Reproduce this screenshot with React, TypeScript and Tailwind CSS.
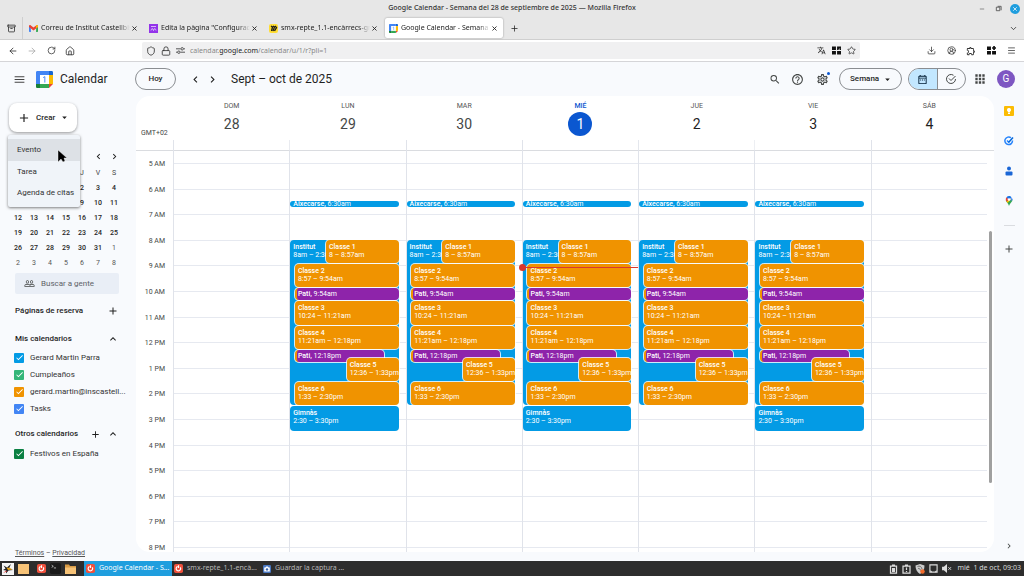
import type { ReactNode } from 'react';
import {
  MdAdd, MdApps, MdArrowDropDown, MdCheck, MdChevronLeft, MdChevronRight, MdHelpOutline, MdKeyboardArrowUp, MdMenu,
  MdOutlineExtension, MdOutlineSettings, MdPeopleOutline, MdSearch, MdTranslate,
} from 'react-icons/md';
import {
  Archive, ArrowLeft, ArrowRight, ChevronDown, CircleUserRound, Download, House, Lock, Menu, Minus, Plus, RotateCw,
  Shield, Star, X,
} from 'lucide-react';

const FIRST_HOUR = 5;
const HOURS = 15;

type CalEvent = {
  title: string;
  time: string;
  start: number;
  end: number;
  left: number;
  right: number;
  kind: 'blue' | 'orange' | 'purple';
  inline?: boolean;
};

const at = (h: number, m: number) => h + m / 60;

const WAKE: CalEvent = { title: 'Aixecarse', time: '6:30am', start: at(6, 30), end: at(6, 45), left: 0, right: 6, kind: 'blue', inline: true };
const SCHOOL: CalEvent[] = [
  WAKE,
  { title: 'Institut', time: '8am – 2:30pm', start: 8, end: at(14, 30), left: 0, right: 6, kind: 'blue' },
  { title: 'Classe 1', time: '8 – 8:57am', start: 8, end: at(8, 57), left: 31, right: 6, kind: 'orange' },
  { title: 'Classe 2', time: '8:57 – 9:54am', start: at(8, 57), end: at(9, 54), left: 4, right: 6, kind: 'orange' },
  { title: 'Pati', time: '9:54am', start: at(9, 54), end: at(10, 24), left: 4, right: 6, kind: 'purple', inline: true },
  { title: 'Classe 3', time: '10:24 – 11:21am', start: at(10, 24), end: at(11, 21), left: 4, right: 6, kind: 'orange' },
  { title: 'Classe 4', time: '11:21am – 12:18pm', start: at(11, 21), end: at(12, 18), left: 4, right: 6, kind: 'orange' },
  { title: 'Pati', time: '12:18pm', start: at(12, 18), end: at(12, 48), left: 4, right: 19, kind: 'purple', inline: true },
  { title: 'Classe 5', time: '12:36 – 1:33pm', start: at(12, 36), end: at(13, 33), left: 49, right: 6, kind: 'orange' },
  { title: 'Classe 6', time: '1:33 – 2:30pm', start: at(13, 33), end: at(14, 30), left: 4, right: 6, kind: 'orange' },
];
const GYM: CalEvent = { title: 'Gimnàs', time: '2:30 – 3:30pm', start: at(14, 30), end: at(15, 30), left: 0, right: 6, kind: 'blue' };

const DAYS: { name: string; num: number; today?: boolean; past?: boolean; events: CalEvent[] }[] = [
  { name: 'DOM', num: 28, past: true, events: [] },
  { name: 'LUN', num: 29, past: true, events: [...SCHOOL, GYM] },
  { name: 'MAR', num: 30, past: true, events: SCHOOL },
  { name: 'MIÉ', num: 1, today: true, events: [...SCHOOL, GYM] },
  { name: 'JUE', num: 2, events: SCHOOL },
  { name: 'VIE', num: 3, events: [...SCHOOL, GYM] },
  { name: 'SÁB', num: 4, events: [] },
];

const KIND = {
  blue: 'bg-[#039be5] pl-[3px]',
  orange: 'bg-[#f09300] pl-[3px]',
  purple: 'bg-[#8e24aa] border-l-2 border-l-[#f09300] pl-px',
};

const offset = (h: number) => `${((h - FIRST_HOUR) / HOURS) * 100}%`;

function EventBlock({ e }: { e: CalEvent }) {
  const short = e.end - e.start < 0.4;
  return (
    <button
      type="button"
      className="absolute rounded-[4px] pb-px text-left text-white"
      style={{ top: offset(e.start), height: `${((e.end - e.start) / HOURS) * 100}%`, left: `${e.left}%`, right: `${e.right}%` }}
    >
      <span
        className={`flex h-full flex-col overflow-hidden whitespace-nowrap rounded-[4px] text-[7px] ${KIND[e.kind]} ${
          e.left > 0 ? 'shadow-[0_0_0_1px_#ffffffcc]' : ''
        } ${e.inline ? 'justify-center' : 'pt-[3px]'} ${short ? 'leading-[6px]' : 'leading-[8px]'}`}
      >
        {e.inline ? (
          <span>
            <span className="font-medium">{e.title},</span> {e.time}
          </span>
        ) : (
          <>
            <span className="font-medium">{e.title}</span>
            <span>{e.time}</span>
          </>
        )}
      </span>
    </button>
  );
}

function CalendarLogo({ className }: { className: string }) {
  return (
    <svg viewBox="0 0 200 200" className={className} aria-hidden="true">
      <path fill="#fff" d="M47 47h106v106H47z" />
      <path fill="#ea4335" d="M153 200l47-47h-47z" />
      <path fill="#fbbc04" d="M200 47h-47v106h47z" />
      <path fill="#34a853" d="M153 153H47v47h106z" />
      <path fill="#188038" d="M0 153v31c0 9 7 16 16 16h31v-47z" />
      <path fill="#1967d2" d="M200 47V16c0-9-7-16-16-16h-31v47z" />
      <path fill="#4285f4" d="M153 0H16C7 0 0 7 0 16v137h47V47h106z" />
      <path fill="none" stroke="#4285f4" strokeWidth="11" d="M84 78l20-12v70" />
    </svg>
  );
}

function GmailLogo() {
  return (
    <svg viewBox="0 0 24 18" className="h-[7px] w-[9px] shrink-0" aria-hidden="true">
      <path fill="#4285f4" d="M0 3h5v15H2a2 2 0 0 1-2-2z" />
      <path fill="#34a853" d="M19 3h5v13a2 2 0 0 1-2 2h-3z" />
      <path fill="#ea4335" d="M0 3C0 0 3-1 5 1l7 5 7-5c2-2 5-1 5 2v2l-12 9L0 5z" />
      <path fill="#fbbc04" d="M19 1c2-2 5-1 5 2v2l-5 4z" />
    </svg>
  );
}

function Squares({ plus }: { plus?: boolean }) {
  return (
    <svg viewBox="0 0 16 16" className="size-[9px]" fill="#111" aria-hidden="true">
      <path d="M0 1h7v6H0zM0 9h7v6H0zM9 9h7v6H9z" />
      {plus ? <path d="M11 0h3v2h2v3h-2v2h-3V5H9V2h2z" /> : <path d="M9 1h7v6h-3l2-4-4 4H9z" />}
    </svg>
  );
}

function SwapIcon() {
  return (
    <svg viewBox="0 0 16 16" className="h-[9px] w-[9px]" fill="none" stroke="#444" strokeWidth="1.6" aria-hidden="true">
      <path d="M0 5h8M14 5h2M0 11h2M8 11h8" />
      <circle cx="11" cy="5" r="2.2" />
      <circle cx="5" cy="11" r="2.2" />
    </svg>
  );
}

function IconButton({ label, children, className = '' }: { label: string; children: ReactNode; className?: string }) {
  return (
    <button type="button" aria-label={label} className={`flex shrink-0 items-center justify-center ${className}`}>
      {children}
    </button>
  );
}

function TitleBar() {
  return (
    <div className="flex h-[17px] shrink-0 items-center bg-[#e7e7e7] text-[#333]">
      <div className="w-16" />
      <h1 className="flex-1 text-center text-[7px] font-medium">Google Calendar - Semana del 28 de septiembre de 2025 — Mozilla Firefox</h1>
      <div className="flex w-16 items-center justify-end gap-2 pr-1">
        <IconButton label="Minimizar" className="size-2"><Minus size={6} /></IconButton>
        <IconButton label="Restaurar" className="size-2">
          <svg viewBox="0 0 8 8" className="size-[7px]" fill="none" stroke="#555" aria-hidden="true">
            <path d="M1.5 2.5h4v4h-4zM3 1.5h4V6" />
          </svg>
        </IconButton>
        <IconButton label="Cerrar" className="size-[10px] rounded-full bg-[#1f9ede] text-white"><X size={6} strokeWidth={3} /></IconButton>
      </div>
    </div>
  );
}

const TABS = [
  { title: 'Correu de Institut Castellbis', icon: <GmailLogo /> },
  {
    title: 'Edita la pàgina "Configuraci',
    icon: (
      <svg viewBox="0 0 18 18" className="size-[9px] shrink-0" aria-hidden="true">
        <path fill="#9333ea" d="M0 0h18v18H0z" />
        <path fill="none" stroke="#fff" strokeWidth="1.3" d="M4 5h10M4 13c0-4 5-4 5 0M9 13c0-4 5-4 5 0M6.500 8v1M11.500 8v1" />
      </svg>
    ),
  },
  {
    title: 'smx-repte_1.1-encàrrecs-gm',
    icon: (
      <svg viewBox="0 0 18 18" className="size-[9px] shrink-0" aria-hidden="true">
        <rect width="18" height="18" rx="4" fill="#ffdd33" />
        <path fill="none" stroke="#1c1c1c" strokeWidth="2.600" d="M4 4l3 2-2 8M8 4l3 2-3 8M12 4l3 3-4 7" />
      </svg>
    ),
  },
  { title: 'Google Calendar - Semana d', icon: <CalendarLogo className="size-[9px] shrink-0" />, active: true },
];

function TabStrip() {
  return (
    <div className="flex h-[23px] shrink-0 items-stretch border-b border-[#cfcfcf] bg-[#e7e7e7] text-[#222]">
      <IconButton label="Pestañas recientes" className="w-[23px] border-r border-[#cfcfcf]"><Archive size={9} /></IconButton>
      <div className="flex" role="tablist">
        {TABS.map((t) => (
          <div
            key={t.title}
            className={`ml-[2px] flex w-[118px] items-center rounded-[2px] pl-1 pr-[5px] ${t.active ? 'my-px bg-white shadow-[0_0_2px_#00000060]' : ''}`}
          >
            <button type="button" role="tab" aria-selected={!!t.active} className="flex min-w-0 flex-1 items-center gap-[3px]">
              {t.icon}
              <span className="flex-1 overflow-hidden whitespace-nowrap text-left text-[7px] leading-3 [mask-image:linear-gradient(to_left,transparent,black_12px)]">{t.title}</span>
            </button>
            <IconButton label="Cerrar pestaña" className="size-2"><X size={7} strokeWidth={3} /></IconButton>
          </div>
        ))}
      </div>
      <IconButton label="Nueva pestaña" className="ml-[6px] w-[10px]"><Plus size={9} /></IconButton>
      <IconButton label="Listar pestañas" className="ml-auto mr-[6px] w-[10px]"><ChevronDown size={9} /></IconButton>
    </div>
  );
}

function NavBar() {
  return (
    <div className="flex h-[22px] shrink-0 items-center border-b border-[#d5d5d8] bg-white text-[#333]">
      <div className="flex gap-[9px] pl-2">
        <IconButton label="Atrás" className="size-[10px]"><ArrowLeft size={10} /></IconButton>
        <IconButton label="Adelante" className="size-[10px] text-[#aaa]"><ArrowRight size={10} /></IconButton>
        <IconButton label="Recargar" className="size-[10px]"><RotateCw size={9} /></IconButton>
        <IconButton label="Inicio" className="size-[10px]"><House size={10} /></IconButton>
      </div>
      <div className="ml-[67px] flex h-[17px] flex-1 items-center gap-[5px] rounded-[2px] bg-[#f0f0f1] px-1">
        <Shield size={10} />
        <Lock size={10} />
        <SwapIcon />
        <div className="flex-1 text-[7px] leading-3 text-[#888]">
          calendar.<span className="text-[#222]">google.com</span>/calendar/u/1/r?pli=1
        </div>
        <IconButton label="Traducir" className="size-[10px]"><MdTranslate size={9} /></IconButton>
        <IconButton label="Aplicaciones" className="size-[10px]"><Squares /></IconButton>
        <IconButton label="Marcador" className="size-[10px]"><Star size={9} /></IconButton>
      </div>
      <div className="flex w-[164px] justify-end gap-[10px] pr-2">
        <IconButton label="Descargas" className="size-[10px]"><Download size={9} /></IconButton>
        <IconButton label="Cuenta" className="size-[10px]"><CircleUserRound size={9} /></IconButton>
        <IconButton label="Extensiones" className="size-[10px]"><MdOutlineExtension size={10} /></IconButton>
        <IconButton label="Complementos" className="size-[10px]"><Squares plus /></IconButton>
        <IconButton label="Menú" className="size-[10px]"><Menu size={9} /></IconButton>
      </div>
    </div>
  );
}

function AppHeader() {
  return (
    <header className="flex h-[34px] shrink-0 items-center text-[#1f1f1f]">
      <div className="flex w-[135px] items-center">
        <IconButton label="Menú principal" className="ml-3 w-[14px] text-[#444]"><MdMenu size={13} /></IconButton>
        <CalendarLogo className="ml-[10px] size-[17px]" />
        <span className="ml-[7px] text-[12px]">Calendar</span>
      </div>
      <button type="button" className="h-[22px] w-[41px] rounded-full border border-[#8a8d91] text-[8px] font-medium">Hoy</button>
      <IconButton label="Semana anterior" className="ml-3 w-[14px]"><MdChevronLeft size={13} /></IconButton>
      <IconButton label="Semana siguiente" className="ml-[3px] w-[14px]"><MdChevronRight size={13} /></IconButton>
      <h2 className="ml-3 text-[12px]">Sept – oct de 2025</h2>
      <div className="ml-auto flex items-center pr-[9px] text-[#444746]">
        <IconButton label="Buscar" className="w-3"><MdSearch size={13} /></IconButton>
        <IconButton label="Ayuda" className="ml-[10px] w-[13px]"><MdHelpOutline size={13} /></IconButton>
        <IconButton label="Configuración" className="relative ml-[12px] mr-[10px] w-[13px]">
          <MdOutlineSettings size={13} />
          <span className="absolute right-[-1px] top-[-1px] size-[3px] rounded-full bg-[#0b57d0]" />
        </IconButton>
        <button type="button" className="flex h-[22px] w-[63px] items-center justify-between rounded-full border border-[#8a8d91] pl-[10px] pr-2 text-[8px] font-medium text-[#1f1f1f]">
          Semana <MdArrowDropDown size={11} />
        </button>
        <div className="ml-[6px] flex h-[22px] w-[58px] overflow-hidden rounded-full border border-[#8a8d91]">
          <IconButton label="Calendario" className="flex-1 border-r border-[#8a8d91] bg-[#c2e7ff] text-[#001d35]">
            <svg viewBox="0 0 24 24" className="size-[11px]" fill="currentColor" aria-hidden="true">
              <path d="M19 4h-1V2h-2v2H8V2H6v2H5a2 2 0 0 0-2 2v14a2 2 0 0 0 2 2h14a2 2 0 0 0 2-2V6a2 2 0 0 0-2-2zm0 16H5V10h14zM5 8V6h14v2zm2 4h2v2H7zm4 0h2v2h-2zm4 0h2v2h-2z" />
            </svg>
          </IconButton>
          <IconButton label="Tareas" className="flex-1">
            <svg viewBox="0 0 24 24" className="size-[12px]" fill="none" stroke="currentColor" strokeWidth="2" aria-hidden="true">
              <path d="M17 4.500A9 9 0 1 0 21 12M8 11l4 4L21 6" />
            </svg>
          </IconButton>
        </div>
        <IconButton label="Aplicaciones de Google" className="ml-[7px] w-[14px]"><MdApps size={14} /></IconButton>
        <button type="button" aria-label="Cuenta de Google" className="ml-[10px] size-[18px] rounded-full bg-[#7e57c2] text-[10px] leading-[18px] text-white">G</button>
      </div>
    </header>
  );
}

const MINI = [
  [28, 29, 30, 1, 2, 3, 4],
  [5, 6, 7, 8, 9, 10, 11],
  [12, 13, 14, 15, 16, 17, 18],
  [19, 20, 21, 22, 23, 24, 25],
  [26, 27, 28, 29, 30, 31, 1],
  [2, 3, 4, 5, 6, 7, 8],
];

function MiniCalendar() {
  return (
    <section className="pl-[10px] pr-[14px] pt-4 text-[#1f1f1f]">
      <div className="flex h-4 items-center justify-end">
        <IconButton label="Mes anterior" className="size-4"><MdChevronLeft size={11} /></IconButton>
        <IconButton label="Mes siguiente" className="size-4"><MdChevronRight size={11} /></IconButton>
      </div>
      <table className="mt-[2px] w-full table-fixed text-center text-[7px] leading-[15px]">
        <thead>
          <tr className="text-[#444746]">
            {['D', 'L', 'M', 'X', 'J', 'V', 'S'].map((d) => (
              <th key={d} className="font-normal">{d}</th>
            ))}
          </tr>
        </thead>
        <tbody>
          {MINI.map((week, r) => (
            <tr key={r}>
              {week.map((d, c) => (
                <td key={c} className={r === 5 || (r === 4 && c === 6) || (r === 0 && c < 3) ? 'text-[#555]' : 'font-medium'}>{d}</td>
              ))}
            </tr>
          ))}
        </tbody>
      </table>
    </section>
  );
}

function CheckRow({ label, color }: { label: string; color: string }) {
  return (
    <label className="flex h-[17px] items-center gap-[6px] text-[8px] text-[#333]">
      <span className="grid size-[10px] shrink-0">
        <input type="checkbox" defaultChecked className={`col-start-1 row-start-1 size-[10px] appearance-none rounded-[1px] ${color}`} />
        <MdCheck size={9} className="pointer-events-none col-start-1 row-start-1 place-self-center text-white" />
      </span>
      <span className="whitespace-nowrap">{label}</span>
    </label>
  );
}

function Sidebar() {
  return (
    <aside className="flex w-[136px] shrink-0 flex-col">
      <div className="relative pl-[9px] pt-[7px]">
        <button type="button" className="flex h-[29px] w-[68px] items-center rounded-[8px] bg-white pl-2 text-[8px] font-medium text-[#1f1f1f] shadow-[0_1px_3px_#00000066]">
          <MdAdd size={14} />
          <span className="ml-[5px]">Crear</span>
          <MdArrowDropDown size={11} className="ml-1" />
        </button>
        <ul role="menu" className="absolute left-2 top-[39px] z-10 w-[72px] rounded-[2px] bg-[#f0f4f9] py-1 text-[8px] text-[#333] shadow-[0_1px_3px_#00000080]">
          {['Evento', 'Tarea', 'Agenda de citas'].map((item, i) => (
            <li key={item} role="none">
              <button type="button" role="menuitem" className={`flex w-full items-center whitespace-nowrap pl-[9px] ${i === 0 ? 'h-[22px] bg-[#dde1e6]' : 'h-[21px]'}`}>{item}</button>
            </li>
          ))}
        </ul>
        <svg viewBox="0 0 10 15" className="absolute left-[57px] top-[54px] z-20 h-[15px] w-[10px]" aria-hidden="true">
          <path d="M1 0v12l3-3 2 3 2-1-1-3h3z" fill="#000" stroke="#fff" strokeWidth=".4" />
        </svg>
      </div>
      <MiniCalendar />
      <div className="pl-[15px] pr-[17px]">
        <label className="mt-[2px] flex h-[21px] items-center gap-[6px] rounded-[2px] bg-[#e9eef6] pl-[9px] text-[#444746]">
          <MdPeopleOutline size={11} className="shrink-0" />
          <input type="text" aria-label="Buscar a gente" placeholder="Buscar a gente" className="w-full min-w-0 bg-transparent text-[8px] outline-none placeholder:text-[#5f6368]" />
        </label>
        <div className="mt-2 flex h-[18px] items-center justify-between text-[8px] font-medium text-[#1f1f1f]">
          Páginas de reserva
          <IconButton label="Crear página de reserva" className="size-3"><MdAdd size={12} /></IconButton>
        </div>
        <div className="mt-[10px] flex h-[18px] items-center justify-between text-[8px] font-medium text-[#1f1f1f]">
          Mis calendarios
          <IconButton label="Contraer" className="size-3"><MdKeyboardArrowUp size={12} /></IconButton>
        </div>
        <div className="-ml-px mt-px">
          <CheckRow label="Gerard Martin Parra" color="bg-[#039be5]" />
          <CheckRow label="Cumpleaños" color="bg-[#33b679]" />
          <CheckRow label="gerard.martin@inscastell..." color="bg-[#f09300]" />
          <CheckRow label="Tasks" color="bg-[#4285f4]" />
        </div>
        <div className="mt-2 flex h-[18px] items-center gap-[6px] text-[8px] font-medium text-[#1f1f1f]">
          <span className="flex-1">Otros calendarios</span>
          <IconButton label="Añadir calendario" className="size-3"><MdAdd size={11} /></IconButton>
          <IconButton label="Contraer" className="size-3"><MdKeyboardArrowUp size={12} /></IconButton>
        </div>
        <div className="-ml-px mt-[2px]">
          <CheckRow label="Festivos en España" color="bg-[#0b8043]" />
        </div>
      </div>
      <p className="mt-auto pb-[3px] pl-[15px] text-[7px] leading-[9px] text-[#555]">
        <a href="#terminos" className="underline">Términos</a> – <a href="#privacidad" className="underline">Privacidad</a>
      </p>
    </aside>
  );
}

function hourLabel(h: number) {
  return h < 12 ? `${h} AM` : `${h === 12 ? 12 : h - 12} PM`;
}

function WeekView() {
  return (
    <main className="relative mb-[9px] flex min-w-0 flex-1 flex-col overflow-hidden rounded-[14px] bg-white">
      <div className="flex h-[55px] shrink-0 border-b border-[#dadce0] pr-[7px]">
        <div className="flex w-[37px] items-end pb-3 pl-[5px] text-[7px] leading-[9px] text-[#444746]">GMT+02</div>
        <div className="grid flex-1 grid-cols-7">
          {DAYS.map((d) => (
            <div key={d.name} className="flex flex-col items-center pt-[5px]">
              <span className={`ml-px text-[7px] leading-[10px] ${d.today ? 'font-medium text-[#0b57d0]' : 'text-[#555]'}`}>{d.name}</span>
              <span
                className={`ml-px mt-px flex size-6 items-center justify-center rounded-full text-[14px] ${
                  d.today ? 'bg-[#0b57d0] text-white' : d.past ? 'text-[#444746]' : 'text-[#1f1f1f]'
                }`}
              >
                {d.num}
              </span>
              <span className="h-[15px] w-full self-start border-l border-[#e0e3ea] [clip-path:inset(4px_0_0_0)]" />
            </div>
          ))}
        </div>
      </div>
      <div className="flex flex-1 pr-[7px]">
        <div className="flex w-[37px] flex-col pt-[12px]">
          <div className="grid h-96 auto-rows-fr">
            {Array.from({ length: HOURS }, (_, i) => (
              <span key={i} className="-mt-[3px] pr-[8px] text-right text-[7px] leading-[9px] text-[#444746]">{hourLabel(FIRST_HOUR + i)}</span>
            ))}
          </div>
          <span className="-mt-[3px] pr-[8px] text-right text-[7px] leading-[9px] text-[#444746]">8 PM</span>
        </div>
        <div className="grid flex-1 grid-cols-7">
          {DAYS.map((d) => (
            <div key={d.name} className="flex flex-col border-l border-[#e0e3ea] pt-[12px]">
              <div className="relative grid h-96 auto-rows-fr">
                {Array.from({ length: HOURS }, (_, i) => (
                  <div key={i} className="border-t border-[#e6e9f0]" />
                ))}
                {d.events.map((e) => (
                  <EventBlock key={e.title + e.time} e={e} />
                ))}
                {d.today && (
                  <div className="absolute inset-x-0 h-px bg-[#db372d]" style={{ top: offset(at(9, 3)) }}>
                    <span className="absolute -left-[4px] -top-[3px] size-[7px] rounded-full bg-[#db372d]" />
                  </div>
                )}
              </div>
              <div className="flex-1 border-t border-[#e6e9f0]" />
            </div>
          ))}
        </div>
      </div>
      <div className="absolute right-[2px] top-[135px] h-[252px] w-[3px] rounded-full bg-[#a0a0a0]" />
    </main>
  );
}

function SidePanel() {
  return (
    <nav className="flex w-[30px] shrink-0 flex-col items-center pb-[10px] pt-[10px]" aria-label="Panel lateral">
      <IconButton label="Keep" className="size-[10px]">
        <svg viewBox="0 0 20 20" className="size-[10px]" aria-hidden="true">
          <rect width="20" height="20" rx="2" fill="#fbbc04" />
          <path fill="#fff" d="M10 4a4 4 0 0 0-2 7.500V13h4v-1.500A4 4 0 0 0 10 4zM8 14h4v2H8z" />
        </svg>
      </IconButton>
      <IconButton label="Tasks" className="mt-5 size-[10px]">
        <svg viewBox="0 0 20 20" className="size-[10px]" fill="none" strokeWidth="3" aria-hidden="true">
          <path stroke="#2684fc" d="M14 3.500A7.600 7.600 0 1 0 17 9M6 9l4 4" />
          <path stroke="#0066da" d="M9 13l9-10" />
        </svg>
      </IconButton>
      <IconButton label="Contactos" className="mt-5 size-[10px]">
        <svg viewBox="0 0 20 20" className="size-[10px]" fill="#1a66d6" aria-hidden="true">
          <circle cx="10" cy="5" r="4" />
          <path d="M3 13q0-2 2-2h10q2 0 2 2v4q0 2-2 2H5q-2 0-2-2z" />
        </svg>
      </IconButton>
      <IconButton label="Maps" className="mt-5 size-[10px]">
        <svg viewBox="0 0 20 20" className="size-[10px]" aria-hidden="true">
          <path fill="#34a853" d="M10 20C9 15 4 12 3.500 8L17 7c0 5-5 7-7 13z" />
          <path fill="#fbbc04" d="M5 11l7-7 1 4-6 6z" />
          <path fill="#ea4335" d="M5 2.500L10 7l-5 4C3 8 3 5 5 2.500z" />
          <path fill="#1a73e8" d="M5 2.500C8-1 13-.5 15 3l-5 5z" />
          <path fill="#4285f4" d="M15 3c2 2 2 3 2 5l-4 2z" />
          <circle cx="10" cy="7" r="2.600" fill="#fff" />
        </svg>
      </IconButton>
      <span className="mt-[19px] h-px w-[11px] bg-[#dadce0]" />
      <IconButton label="Instalar complementos" className="mt-[17px] size-3 text-[#444746]"><MdAdd size={12} /></IconButton>
      <IconButton label="Ocultar panel lateral" className="mt-auto size-[10px] text-[#444746]"><MdChevronRight size={10} /></IconButton>
    </nav>
  );
}

function BrowserIcon() {
  return (
    <svg viewBox="0 0 20 20" className="size-[9px] shrink-0" aria-hidden="true">
      <rect width="20" height="20" rx="4" fill="#f0503c" />
      <path fill="none" stroke="#fff" strokeWidth="2.600" d="M8 5.500a5 5 0 1 0 6 2M10 3v6" />
    </svg>
  );
}

function Taskbar() {
  return (
    <footer className="flex h-[15px] shrink-0 items-center bg-[#2d2d2d] text-[7px] text-[#b8b8b8]">
      <div className="flex w-[84px] items-center gap-1 pl-[2px]">
        <svg viewBox="0 0 24 24" className="size-3" aria-hidden="true">
          <path fill="#f4f4f4" d="M0 0h24v24H0z" />
          <path fill="#222" d="M3 5l7 4 8-7-4 9 8 3-9 1-5 6v-6l-6-1 5-3z" />
          <path fill="#e8a317" d="M9 9l7 1 5 3-9 1z" />
          <path fill="#d33" d="M2 20l7-5 1 2z" />
        </svg>
        <span className="h-[10px] w-[11px] bg-[#f7c377]" />
        <span className="ml-1 flex"><BrowserIcon /></span>
        <svg viewBox="0 0 20 20" className="size-[11px]" aria-hidden="true">
          <rect width="20" height="20" rx="3" fill="#1a1a1a" />
          <path fill="none" stroke="#ccc" strokeWidth="1.500" d="M3 4l3 2-3 2M7 9h4" />
        </svg>
        <svg viewBox="0 0 22 20" className="h-[10px] w-[11px]" aria-hidden="true">
          <path fill="#d99b45" d="M0 1h8l2 3h12v15H0z" />
          <path fill="#f7c377" d="M0 7h22v13H0z" />
        </svg>
      </div>
      <button type="button" className="flex h-full w-[88px] items-center gap-1 bg-[#1f9ede] pl-[2px] text-white"><BrowserIcon /><span className="whitespace-nowrap">Google Calendar - S...</span></button>
      <button type="button" className="flex h-full w-[88px] items-center gap-1 pl-[2px]"><BrowserIcon /><span className="whitespace-nowrap">smx-repte_1.1-encà...</span></button>
      <button type="button" className="flex h-full w-[88px] items-center gap-1 pl-[3px]">
        <svg viewBox="0 0 20 20" className="size-[8px] shrink-0" aria-hidden="true">
          <rect width="20" height="20" rx="3" fill="#4a78c2" />
          <path fill="#fff" d="M3 6h3l2-2h4l2 2h3v10H3z" />
          <circle cx="10" cy="11" r="3" fill="#3563ad" />
        </svg>
        <span className="whitespace-nowrap">Guardar la captura ...</span>
      </button>
      <div className="ml-auto flex items-center gap-1 pr-[3px] text-[#d8d8d8]">
        <svg viewBox="0 0 18 20" className="h-[10px] w-[9px]" fill="none" stroke="#ddd" strokeWidth="2.500" aria-hidden="true">
          <path d="M3 4h12v14H3zM6 2h6" /><path fill="#ddd" stroke="none" d="M6 8h6v8H6z" />
        </svg>
        <svg viewBox="0 0 18 20" className="h-[10px] w-[9px]" fill="none" stroke="#ddd" strokeWidth="2.500" aria-hidden="true">
          <path d="M2 4h14v14H2zM6 2h6M9 7v5M9 14v2" />
        </svg>
        <svg viewBox="0 0 20 20" className="size-[10px]" aria-hidden="true">
          <path fill="#ccc" d="M10 0l9 3c0 8-3 13-9 17C4 16 1 11 1 3z" />
          <path fill="none" stroke="#555" strokeWidth="1.500" d="M5 5c4-2 8 0 9 5M6 9c3-1 4 1 5 4" />
          <circle cx="15" cy="15" r="4.500" fill="#f26b2a" />
        </svg>
        <svg viewBox="0 0 20 20" className="size-[9px]" fill="none" stroke="#ddd" strokeWidth="2.500" aria-hidden="true">
          <path d="M2 2h16v16H2z" /><path d="M3 15l3 3M17 15l-3 3" />
        </svg>
        <svg viewBox="0 0 22 20" className="h-[9px] w-[10px]" fill="#ddd" aria-hidden="true">
          <path d="M0 6h4l7-6v20l-7-6H0z" /><path stroke="#ddd" strokeWidth="2" d="M14 7l6 6M20 7l-6 6" />
        </svg>
        <time className="whitespace-nowrap pl-px">mié&nbsp; 1 de oct, 09:03</time>
      </div>
    </footer>
  );
}

export default function App() {
  return (
    <div className="flex h-screen min-h-[576px] flex-col overflow-hidden bg-[#f8fafd] font-['Noto_Sans',sans-serif]">
      <TitleBar />
      <TabStrip />
      <NavBar />
      <div className="flex min-h-0 flex-1 flex-col font-['Roboto',sans-serif]">
        <AppHeader />
        <div className="flex min-h-0 flex-1">
          <Sidebar />
          <WeekView />
          <SidePanel />
        </div>
      </div>
      <Taskbar />
    </div>
  );
}
